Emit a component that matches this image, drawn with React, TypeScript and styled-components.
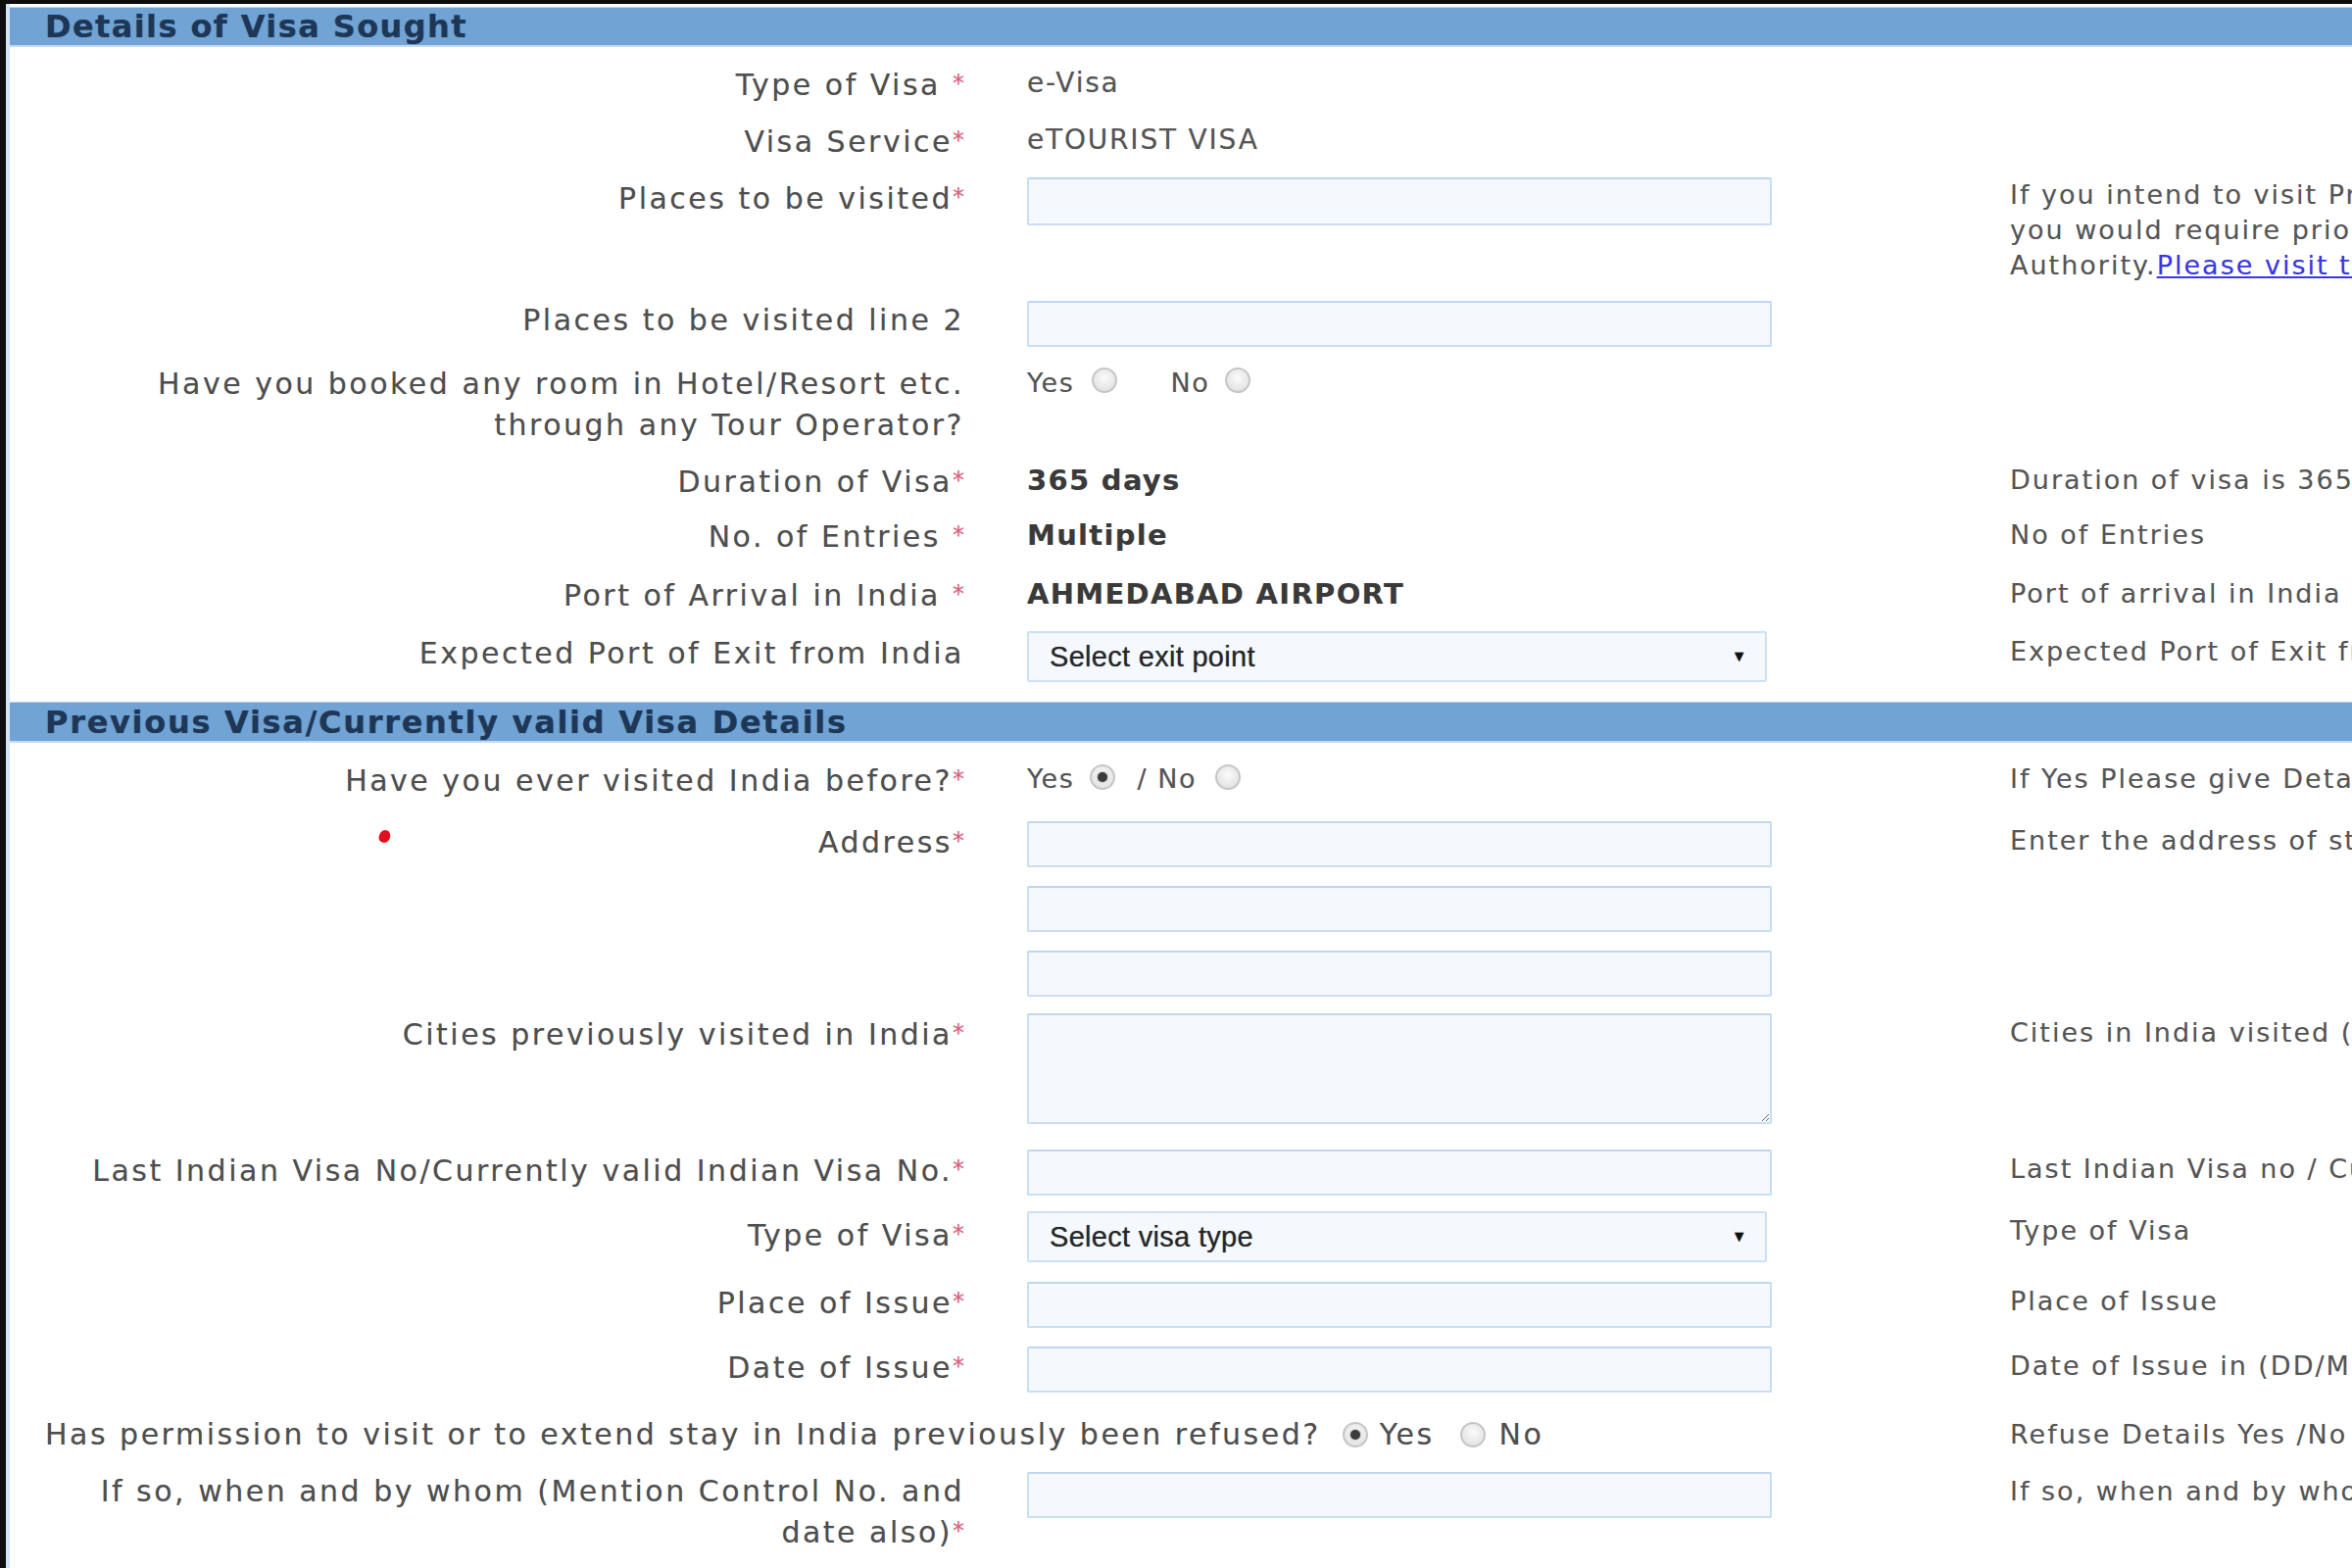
import React from "react";
import styled, { createGlobalStyle } from "styled-components";

const Global = createGlobalStyle`
  html, body { margin: 0; padding: 0; background: #ffffff; }
  body { font-family: "DejaVu Sans", Verdana, sans-serif; overflow: hidden; }
  * { box-sizing: border-box; }
`;

const Page = styled.div`
  width: 2400px;
  height: 1600px;
  overflow: hidden;
  border-top: 4px solid #0d0d0d;
  border-left: 6px solid #0d0d0d;
  background: #ffffff;
`;

const Inner = styled.div`
  height: 100%;
  border-left: 4px solid #d3e4f6;
  padding-top: 3px;
`;

const SectionHeader = styled.div<{ $h: number; $ls: number }>`
  height: ${(p) => p.$h}px;
  background: #71a4d5;
  border-top: 1px solid #b9d4ef;
  border-bottom: 2px solid #c4dbf1;
  display: flex;
  align-items: center;
  padding-left: 36px;
  font-weight: bold;
  font-size: 32px;
  letter-spacing: ${(p) => p.$ls}px;
  color: #1e3757;
  white-space: nowrap;
  text-shadow: 0 0 1px rgba(30, 55, 87, 0.5);
`;

const SectionBody = styled.div<{ $pt: number }>`
  padding-top: ${(p) => p.$pt}px;
`;

const Row = styled.div<{ $h: number }>`
  display: grid;
  grid-template-columns: 974px 1003px 1fr;
  height: ${(p) => p.$h}px;
  align-items: start;
`;

const WideRow = styled.div<{ $h: number }>`
  display: grid;
  grid-template-columns: 1977px 1fr;
  height: ${(p) => p.$h}px;
  align-items: start;
`;

const Label = styled.div<{ $offset?: number; $lh?: number }>`
  position: relative;
  text-align: right;
  white-space: nowrap;
  font-size: 30px;
  letter-spacing: 2.5px;
  line-height: ${(p) => p.$lh ?? 40}px;
  color: #4e4e4e;
  padding-top: ${(p) => p.$offset ?? 0}px;
  text-shadow: 0 0 1px rgba(0, 0, 0, 0.2);
`;

const InlineQuestion = styled.div`
  display: flex;
  align-items: center;
  padding-left: 36px;
  white-space: nowrap;
  font-size: 30px;
  letter-spacing: 2.5px;
  line-height: 40px;
  color: #4e4e4e;
  text-shadow: 0 0 1px rgba(0, 0, 0, 0.2);
`;

const Req = styled.span`
  color: #e2607c;
  font-size: 24px;
  letter-spacing: 0;
  vertical-align: 4px;
`;

const Field = styled.div`
  padding-left: 64px;
  display: flex;
  flex-direction: column;
  gap: 19px;
`;

const Help = styled.div<{ $lh?: number; $offset?: number }>`
  padding-left: 64px;
  padding-top: ${(p) => p.$offset ?? 0}px;
  white-space: nowrap;
  font-size: 27px;
  letter-spacing: 2px;
  line-height: ${(p) => p.$lh ?? 40}px;
  color: #555555;
  text-shadow: 0 0 1px rgba(0, 0, 0, 0.15);
`;

const HelpLink = styled.a`
  color: #3a36e6;
  text-decoration: underline;
`;

const ValueText = styled.div<{ $bold?: boolean }>`
  font-size: ${(p) => (p.$bold ? 29 : 28)}px;
  font-weight: ${(p) => (p.$bold ? "bold" : "normal")};
  letter-spacing: ${(p) => (p.$bold ? 1.3 : 1.8)}px;
  line-height: 40px;
  color: ${(p) => (p.$bold ? "#3a3a3a" : "#555555")};
  white-space: nowrap;
  text-shadow: 0 0 1px rgba(0, 0, 0, 0.2);
`;

const TextInput = styled.input<{ $h?: number }>`
  display: block;
  width: 760px;
  height: ${(p) => p.$h ?? 47}px;
  margin: 0;
  border: 2px solid #c9def5;
  border-top-color: #bed6f1;
  background: #f5f9fe;
  border-radius: 2px;
  outline: none;
  font-size: 26px;
`;

const TextArea = styled.textarea`
  display: block;
  width: 760px;
  height: 113px;
  margin: 0;
  border: 2px solid #c9def5;
  border-top-color: #bed6f1;
  background: #f5f9fe;
  border-radius: 2px;
  outline: none;
  resize: both;
  font-size: 26px;
`;

const SelectBox = styled.div`
  width: 755px;
  height: 52px;
  border: 2px solid #cde1f6;
  background: #f5f9fe;
  border-radius: 2px;
  display: flex;
  align-items: center;
  justify-content: space-between;
  padding: 0 18px 0 21px;
  font-family: "Liberation Sans", Arial, sans-serif;
  font-size: 29px;
  letter-spacing: 0.3px;
  color: #262626;
  text-shadow: 0 0 1px rgba(0, 0, 0, 0.5);
`;

const Arrow = styled.span`
  font-size: 16px;
  color: #111;
`;

const RadioGroup = styled.div`
  display: flex;
  align-items: center;
  font-size: 27px;
  letter-spacing: 1.6px;
  line-height: 40px;
  color: #555555;
  white-space: nowrap;
  text-shadow: 0 0 1px rgba(0, 0, 0, 0.2);
`;

const RadioText = styled.span<{ $ml: number }>`
  margin-left: ${(p) => p.$ml}px;
`;

const Radio = styled.span<{ $checked?: boolean; $ml: number; $lift?: number }>`
  display: inline-block;
  flex: none;
  position: relative;
  width: 26px;
  height: 26px;
  border-radius: 50%;
  margin-left: ${(p) => p.$ml}px;
  border: 2px solid #c6c6c6;
  background: radial-gradient(circle at 50% 40%, #fbfbfb 0%, #e6e6e6 65%, #d6d6d6 100%);
  transform: translateY(${(p) => -(p.$lift ?? 0)}px);
  &::after {
    content: "";
    display: ${(p) => (p.$checked ? "block" : "none")};
    position: absolute;
    left: 50%;
    top: 50%;
    width: 10px;
    height: 10px;
    margin: -5px 0 0 -5px;
    border-radius: 50%;
    background: #3c3c3c;
    box-shadow: 0 0 2px rgba(0, 0, 0, 0.5);
  }
`;

const RedMark = styled.span`
  position: absolute;
  left: 377px;
  top: 9px;
  width: 11px;
  height: 13px;
  border-radius: 50% 45% 50% 40%;
  background: #e0101e;
  transform: rotate(20deg);
`;

const R = () => <Req>*</Req>;

export default function App() {
  return (
    <>
      <Global />
      <Page>
        <Inner>
          <SectionHeader $h={41} $ls={1.4}>Details of Visa Sought</SectionHeader>
          <SectionBody $pt={17}>
            <Row $h={58}>
              <Label>Type of Visa <R /></Label>
              <Field>
                <ValueText>e-Visa</ValueText>
              </Field>
              <Help />
            </Row>
            <Row $h={58}>
              <Label>Visa Service<R /></Label>
              <Field>
                <ValueText>eTOURIST VISA</ValueText>
              </Field>
              <Help />
            </Row>
            <Row $h={126}>
              <Label>Places to be visited<R /></Label>
              <Field>
                <TextInput type="text" $h={49} />
              </Field>
              <Help $lh={36}>
                If you intend to visit Protected/Restricted/Cantonment areas,
                <br />
                you would require prior permission from the Civil
                <br />
                Authority.<HelpLink href="#">Please visit the link for details</HelpLink>
              </Help>
            </Row>
            <Row $h={64}>
              <Label>Places to be visited line 2</Label>
              <Field>
                <TextInput type="text" />
              </Field>
              <Help />
            </Row>
            <Row $h={99}>
              <Label $lh={42}>
                Have you booked any room in Hotel/Resort etc.
                <br />
                through any Tour Operator?
              </Label>
              <Field>
                <RadioGroup>
                  <span>Yes</span>
                  <Radio $ml={18} $lift={3} />
                  <RadioText $ml={54}>No</RadioText>
                  <Radio $ml={16} $lift={3} />
                </RadioGroup>
              </Field>
              <Help />
            </Row>
            <Row $h={56}>
              <Label>Duration of Visa<R /></Label>
              <Field>
                <ValueText $bold>365 days</ValueText>
              </Field>
              <Help>Duration of visa is 365 days from the date of grant of ETA</Help>
            </Row>
            <Row $h={60}>
              <Label>No. of Entries <R /></Label>
              <Field>
                <ValueText $bold>Multiple</ValueText>
              </Field>
              <Help>No of Entries</Help>
            </Row>
            <Row $h={58}>
              <Label>Port of Arrival in India <R /></Label>
              <Field>
                <ValueText $bold>AHMEDABAD AIRPORT</ValueText>
              </Field>
              <Help>Port of arrival in India</Help>
            </Row>
            <Row $h={72}>
              <Label $offset={3}>Expected Port of Exit from India</Label>
              <Field>
                <SelectBox>
                  <span>Select exit point</span>
                  <Arrow>▼</Arrow>
                </SelectBox>
              </Field>
              <Help $offset={1}>Expected Port of Exit from India</Help>
            </Row>
          </SectionBody>

          <SectionHeader $h={42} $ls={1.7}>Previous Visa/Currently valid Visa Details</SectionHeader>
          <SectionBody $pt={17}>
            <Row $h={63}>
              <Label>Have you ever visited India before?<R /></Label>
              <Field>
                <RadioGroup>
                  <span>Yes</span>
                  <Radio $ml={16} $lift={2} $checked />
                  <RadioText $ml={22}>/ No</RadioText>
                  <Radio $ml={19} $lift={2} />
                </RadioGroup>
              </Field>
              <Help>If Yes Please give Details</Help>
            </Row>
            <Row $h={196}>
              <Label>
                <RedMark />
                Address<R />
              </Label>
              <Field>
                <TextInput type="text" />
                <TextInput type="text" />
                <TextInput type="text" />
              </Field>
              <Help>Enter the address of stay</Help>
            </Row>
            <Row $h={139}>
              <Label>Cities previously visited in India<R /></Label>
              <Field>
                <TextArea />
              </Field>
              <Help>Cities in India visited (comma separated)</Help>
            </Row>
            <Row $h={63}>
              <Label>Last Indian Visa No/Currently valid Indian Visa No.<R /></Label>
              <Field>
                <TextInput type="text" />
              </Field>
              <Help>Last Indian Visa no / Currently valid Indian Visa no</Help>
            </Row>
            <Row $h={72}>
              <Label $offset={3}>Type of Visa<R /></Label>
              <Field>
                <SelectBox>
                  <span>Select visa type</span>
                  <Arrow>▼</Arrow>
                </SelectBox>
              </Field>
              <Help>Type of Visa</Help>
            </Row>
            <Row $h={66}>
              <Label>Place of Issue<R /></Label>
              <Field>
                <TextInput type="text" />
              </Field>
              <Help>Place of Issue</Help>
            </Row>
            <Row $h={70}>
              <Label>Date of Issue<R /></Label>
              <Field>
                <TextInput type="text" />
              </Field>
              <Help>Date of Issue in (DD/MM/YYYY)</Help>
            </Row>
            <WideRow $h={58}>
              <InlineQuestion>
                Has permission to visit or to extend stay in India previously been refused?
                <Radio $ml={22} $checked />
                <RadioText $ml={12}>Yes</RadioText>
                <Radio $ml={26} />
                <RadioText $ml={14}>No</RadioText>
              </InlineQuestion>
              <Help>Refuse Details Yes /No</Help>
            </WideRow>
            <Row $h={97}>
              <Label>
                If so, when and by whom (Mention Control No. and
                <br />
                date also)<R />
              </Label>
              <Field>
                <TextInput type="text" />
              </Field>
              <Help>If so, when and by whom</Help>
            </Row>
          </SectionBody>
        </Inner>
      </Page>
    </>
  );
}
